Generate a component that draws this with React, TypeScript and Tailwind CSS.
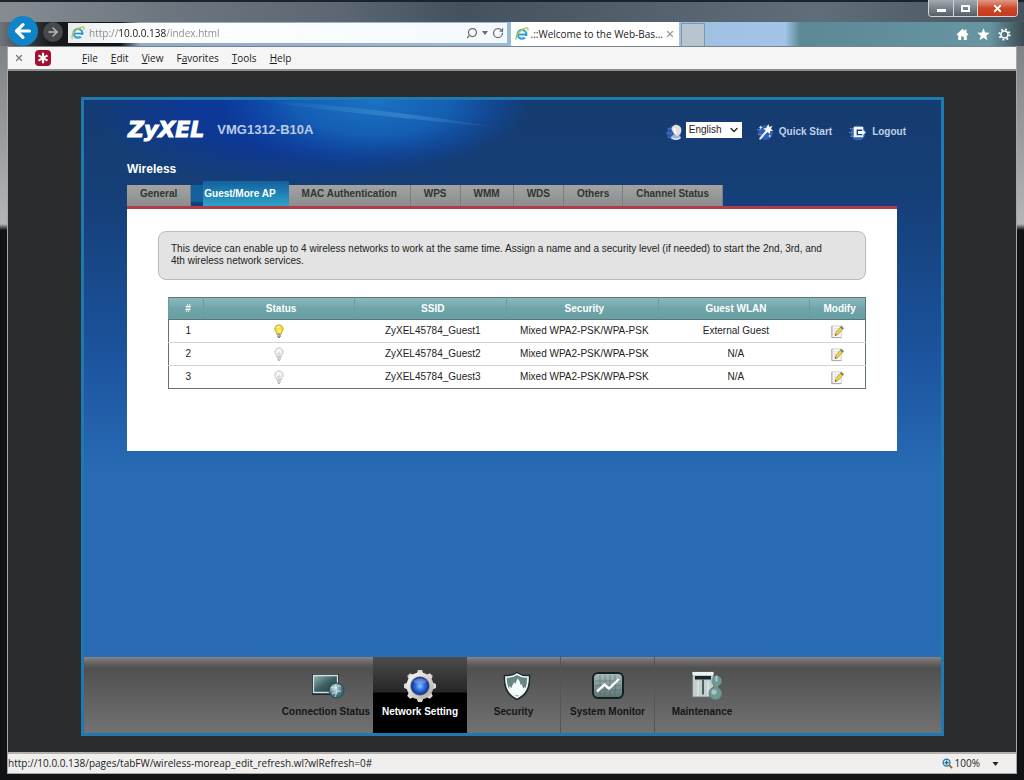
import type { ReactNode } from 'react'
import { ArrowLeft, ArrowRight, ChevronDown, RotateCw, Search, X } from 'lucide-react'

type Network = {
  id: number
  active: boolean
  ssid: string
  security: string
  guest: string
}

const networks: Network[] = [
  { id: 1, active: true, ssid: 'ZyXEL45784_Guest1', security: 'Mixed WPA2-PSK/WPA-PSK', guest: 'External Guest' },
  { id: 2, active: false, ssid: 'ZyXEL45784_Guest2', security: 'Mixed WPA2-PSK/WPA-PSK', guest: 'N/A' },
  { id: 3, active: false, ssid: 'ZyXEL45784_Guest3', security: 'Mixed WPA2-PSK/WPA-PSK', guest: 'N/A' },
]

const menus = [
  ['', 'F', 'ile'],
  ['', 'E', 'dit'],
  ['', 'V', 'iew'],
  ['F', 'a', 'vorites'],
  ['', 'T', 'ools'],
  ['', 'H', 'elp'],
]

const tabs = ['General', 'Guest/More AP', 'MAC Authentication', 'WPS', 'WMM', 'WDS', 'Others', 'Channel Status']

function IeLogo() {
  return (
    <svg viewBox="0 0 16 16" className="size-[14px] shrink-0" aria-hidden="true">
      <circle cx="8" cy="8.4" r="5" fill="#e6f5fc" stroke="#37a3dc" strokeWidth="2.6" />
      <path d="M3.5 8.6h9.4" stroke="#2b8fce" strokeWidth="1.9" />
      <path d="M10 10.2h5v2h-4z" fill="#fff" />
      <path d="M1.6 14.6C-.4 11 5.5 2.6 12 1.2c2.600-.5 3.400.8 2.500 3" fill="none" stroke="#b9c840" strokeWidth="1.5" />
    </svg>
  )
}

function Bulb({ on }: { on: boolean }) {
  return (
    <svg viewBox="0 0 12 16" className="mx-auto h-[15px] w-[12px]" role="img" aria-label={on ? 'On' : 'Off'}>
      <path
        d="M6 1a4.4 4.4 0 0 0-4.4 4.4c0 2 1.700 3 2.100 5.200h4.600c.4-2.200 2.100-3.200 2.100-5.200A4.400 4.400 0 0 0 6 1z"
        fill={on ? '#f7df3a' : '#f3f3f3'}
        stroke={on ? '#b99b1c' : '#bcbcbc'}
        strokeWidth="1"
      />
      <path d="M4.300 4.400c.4-1 1.200-1.500 2.200-1.500" stroke="#fff" strokeWidth="1.3" fill="none" />
      <path d="M5 10V6.500h2V10" stroke={on ? '#fff6b0' : '#c4c4c4'} strokeWidth=".8" fill="none" />
      <path d="M4 11.500h4M4 13h4M5 14.500h2" stroke={on ? '#75777c' : '#b5b5b5'} strokeWidth="1.1" />
    </svg>
  )
}

function EditNote() {
  return (
    <svg viewBox="0 0 16 16" className="size-[15px]" aria-hidden="true">
      <path d="M2 2h10v12.500H2z" fill="#f8f8f8" stroke="#d0d0d0" />
      <path d="M2 2v12.500h10" fill="none" stroke="#a5a5a5" />
      <path d="M4 5h6M4 7.500h4M4 10h2" stroke="#d5dade" />
      <path d="M12 2.200l2.600 2.200-6 6.800-3.200 1.300.8-3.400z" fill="#f2cf3e" stroke="#9c8830" strokeWidth=".6" />
      <path d="M12 2.200l2.600 2.200-1.200 1.400-2.600-2.200z" fill="#6c7c82" />
      <path d="M5.400 12.500l.5-1.800 1.200 1.100z" fill="#333" />
    </svg>
  )
}

function GlobeIcon() {
  return (
    <svg viewBox="0 0 20 20" className="mt-1 size-[19px]" aria-hidden="true">
      <circle cx="9.5" cy="10.5" r="7.5" fill="#2d58a8" />
      <path d="M1 10.500h6M3 6h5M3 15h6" stroke="#5c86cd" strokeWidth="1.2" strokeDasharray="1.5 1" />
      <path d="M6 15c2 3.500 9 4 11 0l-3-3H9z" fill="#9fb4d6" />
      <path d="M7 7c0-4 3-5.500 6-5s4.500 3 4.200 6.200c-.3 3-2.200 5.300-4.200 5.300-1.500 0-2.500-1-3.500-1.800z" fill="#dfe1e0" />
      <path d="M9 5c1.500 1 1 4 3 6.500" stroke="#fff" strokeWidth="1.5" fill="none" />
      <path d="M7 15.500c3 2.200 6 2.200 9 0" stroke="#e6eaf2" strokeWidth="1.5" fill="none" />
    </svg>
  )
}

function WandIcon() {
  return (
    <svg viewBox="0 0 20 20" className="size-[19px]" aria-hidden="true">
      <circle cx="10" cy="11" r="7.8" fill="#2f5db3" />
      <path d="M1 8h4M2 13h5" stroke="#6b93d8" strokeWidth="1.3" strokeDasharray="1.5 1" />
      <path d="M4.500 17.500l7.500-9" stroke="#e9effa" strokeWidth="2.2" strokeLinecap="round" />
      <path d="M13 2l.9 3.200L17.500 4l-2 3 2.500 2.300-3.300.2.200 3.500-2.500-2.500-3 1.600 1-3.200L7.500 7l3.300-.6z" fill="#fff" />
      <path d="M5 3.500l.6 1.600 1.600.5-1.600.6L5 7.800l-.6-1.600-1.600-.6 1.600-.5zM14.500 13l.5 1.200 1.200.5-1.200.5-.5 1.200-.5-1.200-1.200-.5 1.200-.5z" fill="#e3ecfb" />
    </svg>
  )
}

function ExitIcon() {
  return (
    <svg viewBox="0 0 20 20" className="size-[19px]" aria-hidden="true">
      <circle cx="9.5" cy="11.5" r="7.800" fill="#3464bb" />
      <path d="M1 7h4M0 11h4M1.500 15h4" stroke="#6d94d8" strokeWidth="1.2" strokeDasharray="1.5 1" />
      <path d="M5 5h10v11H5z" fill="#f5f8ff" />
      <path d="M8 8h6v1.500H9.500v3H14V14H8z" fill="#16407a" />
      <path d="M10.500 10h4V8.200l3.200 2.800-3.200 2.800V12h-4z" fill="#f5f8ff" />
    </svg>
  )
}

function ConnectionIcon() {
  return (
    <svg viewBox="0 0 34 26" className="ml-1 h-[26px] w-[34px]" aria-hidden="true">
      <defs>
        <linearGradient id="screen" x1="0" y1="0" x2="1" y2="1">
          <stop offset="0" stopColor="#9ab5b5" />
          <stop offset=".5" stopColor="#3c5f62" />
          <stop offset="1" stopColor="#223c40" />
        </linearGradient>
        <radialGradient id="globe" cx=".4" cy=".35">
          <stop offset="0" stopColor="#cfe4e6" />
          <stop offset="1" stopColor="#3c6e7a" />
        </radialGradient>
      </defs>
      <path d="M1 1h27v21H1z" fill="#1a2a2c" />
      <path d="M2.500 2.500h24v17h-24z" fill="url(#screen)" stroke="#d5dfdf" strokeWidth="1.3" />
      <circle cx="25.500" cy="17.500" r="7.500" fill="url(#globe)" stroke="#29464e" />
      <path d="M20 15c3-3 4 1 6-1s2-2 4 0M21 21c2-2 4 0 5-2s3 0 4-1M25 11c-1 4 2 8-1 13" stroke="#e1f1f2" strokeWidth=".8" fill="none" />
    </svg>
  )
}

function GearIcon() {
  return (
    <svg viewBox="0 0 34 34" className="size-[34px]" aria-hidden="true">
      <defs>
        <linearGradient id="gear" x1="0" y1="0" x2="1" y2="1">
          <stop offset="0" stopColor="#fff" />
          <stop offset="1" stopColor="#aaa9a3" />
        </linearGradient>
        <radialGradient id="core" cx=".5" cy=".5">
          <stop offset="0" stopColor="#8fc3ff" />
          <stop offset=".5" stopColor="#2f6fe0" />
          <stop offset="1" stopColor="#102c8c" />
        </radialGradient>
      </defs>
      <g fill="#dcdbd7">
        {[0, 45, 90, 135].map((angle) => (
          <path key={angle} d="M15 1h4l1.500 4v24L19 33h-4l-1.500-4V5z" transform={`rotate(${angle} 17 17)`} />
        ))}
      </g>
      <circle cx="17" cy="17" r="13.500" fill="url(#gear)" />
      <circle cx="17" cy="17" r="9.800" fill="#7c8085" />
      <circle cx="17" cy="17" r="9" fill="url(#core)" />
      <path d="M10 13c3-5 11-5 14 0-4 2-9 2-14 0z" fill="#fff" opacity=".25" />
    </svg>
  )
}

function ShieldIcon() {
  return (
    <svg viewBox="0 0 28 30" className="ml-[6px] h-[30px] w-[28px]" aria-hidden="true">
      <path d="M14 1.500C11 4 6 5 1.500 4.500 1 15 3 23.500 14 28.500 25 23.500 27 15 26.500 4.500 22 5 17 4 14 1.500z" fill="#5b7775" stroke="#1d2a2a" strokeWidth="1.6" />
      <path d="M14 3.200C11 5.400 7 6.200 3 6c0 9 2 16 11 20.500C23 22 25 15 25 6c-4 .2-8-.6-11-2.800z" fill="#668784" stroke="#f4f7f7" strokeWidth="1.6" />
      <path d="M14 24.500c-6-1-9-5-7.500-9.500l2 2.500c0-3 2-4 2.500-6.500l1.500 2c.5-2.500 1.500-4 2-5.500 2 2 3 4 2.800 6.500l1.700-1c-.2 2 1 2.500 1 4.500l1.800-1.500c1 4-2 8-7.800 8.500z" fill="#f7fafa" />
    </svg>
  )
}

function MonitorIcon() {
  return (
    <svg viewBox="0 0 32 27" className="h-[27px] w-[32px]" aria-hidden="true">
      <defs>
        <linearGradient id="chart" x1="0" y1="0" x2="0" y2="1">
          <stop offset="0" stopColor="#a9bdbc" />
          <stop offset="1" stopColor="#5a7271" />
        </linearGradient>
      </defs>
      <rect x="1" y="1" width="30" height="25" rx="5" fill="url(#chart)" stroke="#142021" strokeWidth="2" />
      <path d="M3 9h26M3 13.500h26M3 18h26M8 3v21M13 3v21M18 3v21M23 3v21" stroke="#4e6765" strokeWidth=".5" />
      <path d="M5 19.500l7.500-7 4.500 4 10-9.500" fill="none" stroke="#fff" strokeWidth="2.4" />
    </svg>
  )
}

function MaintenanceIcon() {
  return (
    <svg viewBox="0 0 32 30" className="ml-[10px] h-[30px] w-[32px]" aria-hidden="true">
      <path d="M1.500 1h21v25h-21z" fill="#c3cfce" stroke="#6b7a79" strokeWidth=".8" />
      <path d="M1.500 1h21v3h-21z" fill="#edf2f1" />
      <path d="M4 5h16v3.500H4z" fill="#17252a" />
      <path d="M12 8.500v15" stroke="#2e4043" strokeWidth="1.600" />
      <path d="M7 10v15M17 10v15" stroke="#e9efee" strokeWidth="1" />
      <circle cx="25.500" cy="10" r="5.200" fill="#6f9893" />
      <path d="M25.500 4.500v6" stroke="#b3cbc8" strokeWidth="2" />
      <circle cx="24.500" cy="22.500" r="6.500" fill="#6f9893" stroke="#4a706c" strokeWidth=".8" />
      <path d="M23 13h4v6h-4z" fill="#6f9893" />
      <circle cx="23" cy="21" r="2.600" fill="#a9c5c1" />
    </svg>
  )
}

const sections: { label: string; icon: ReactNode }[] = [
  { label: 'Connection Status', icon: <ConnectionIcon /> },
  { label: 'Network Setting', icon: <GearIcon /> },
  { label: 'Security', icon: <ShieldIcon /> },
  { label: 'System Monitor', icon: <MonitorIcon /> },
  { label: 'Maintenance', icon: <MaintenanceIcon /> },
]

function WindowButtons() {
  return (
    <div className="absolute top-0 right-[6px] flex h-[17px] overflow-hidden rounded-b border border-t-0 border-[#cfd4d8]">
      <button aria-label="Minimize" className="flex w-6 items-end justify-center bg-linear-to-b from-[#a3a9af] to-[#565f68] pb-1">
        <span className="h-[3px] w-[9px] bg-white" />
      </button>
      <button aria-label="Maximize" className="flex w-6 items-center justify-center border-l border-[#cfd4d8] bg-linear-to-b from-[#a3a9af] to-[#565f68]">
        <span className="h-[7px] w-[9px] border-2 border-white" />
      </button>
      <button aria-label="Close window" className="flex w-10 items-center justify-center border-l border-[#cfd4d8] bg-linear-to-b from-[#dc9a88] via-[#cf4527] to-[#c23c20] text-white">
        <X size={11} strokeWidth={4} />
      </button>
    </div>
  )
}

function TitleBar() {
  return (
    <header className="relative">
      <div className="h-[22px] border-t-2 border-[#1c232b] bg-[linear-gradient(to_right,#878c92,#6e7780_15%,#5c6773_33%,#44515e_45%,#54636f_65%,#5f6e7a_80%,#47525c)]" />
      <WindowButtons />
      <div className="flex h-6 items-end bg-[linear-gradient(to_right,#6f7479,#17191b_50px,#101214_120px,#8eaccb_140px,#a3c4e6_785px,#5d8896_800px,#6795a2_990px,#3d4b52)]">
        <button aria-label="Back" className="ml-2 flex size-[30px] shrink-0 items-center justify-center rounded-full bg-[#0f84c8] text-white">
          <ArrowLeft size={22} strokeWidth={3.5} />
        </button>
        <button aria-label="Forward" className="mb-1 ml-[5px] flex size-5 shrink-0 items-center justify-center rounded-full bg-[#46494c] text-[#b9bbbd]">
          <ArrowRight size={14} strokeWidth={2.5} />
        </button>
        <div className="mb-[3px] ml-[5px] flex h-5 min-w-0 flex-[433] items-center gap-1 bg-[linear-gradient(to_right,#e9ebed,#fff_70px,#f4f9ff)] px-[3px] text-[#6b6b6b]">
          <IeLogo />
          <input
            aria-label="Address"
            defaultValue="http://10.0.0.138/index.html"
            className="min-w-0 flex-1 bg-[linear-gradient(to_right,#888_29px,#111_29px,#111_77px,#888_77px)] bg-clip-text text-[10px] text-transparent outline-none"
          />
          <button aria-label="Search">
            <Search size={12} strokeWidth={2.5} className="-scale-x-100" />
          </button>
          <svg viewBox="0 0 6 4" className="h-1 w-[6px] fill-current" aria-hidden="true">
            <path d="M0 0h6L3 4z" />
          </svg>
          <button aria-label="Refresh">
            <RotateCw size={12} strokeWidth={2.5} />
          </button>
        </div>
        <div className="ml-1 flex h-6 min-w-0 flex-[161] items-center gap-[2px] bg-white px-1">
          <IeLogo />
          <span className="flex-1 text-[10px] whitespace-nowrap text-[#222]">.::Welcome to the Web-Bas...</span>
          <button aria-label="Close tab" className="text-[#999]">
            <X size={10} strokeWidth={3} />
          </button>
        </div>
        <button aria-label="New tab" className="ml-[2px] h-[23px] w-6 shrink-0 border border-b-0 border-[#8195a8] bg-[#b8c4d0]" />
        <div className="flex flex-[306] items-center justify-end gap-2 self-center pr-[13px] text-white">
          <button aria-label="Home">
            <svg viewBox="0 0 13 13" className="size-[13px] fill-current" aria-hidden="true">
              <path d="M6.500.8L.5 6.500l1 1 .7-.6V12h3V8.500h2.600V12h3V6.900l.7.6 1-1-2-1.900V1.500H8.800v1.500z" />
            </svg>
          </button>
          <button aria-label="Favorites">
            <svg viewBox="0 0 13 13" className="size-[13px] fill-current" aria-hidden="true">
              <path d="M6.500.3l1.700 4.300 4.500.2-3.500 2.900 1.200 4.500-3.900-2.500-3.900 2.500 1.200-4.500L.3 4.800l4.500-.2z" />
            </svg>
          </button>
          <button aria-label="Settings">
            <svg viewBox="0 0 14 14" className="size-[13px]" aria-hidden="true">
              <circle cx="7" cy="7" r="3.800" fill="none" stroke="#fff" strokeWidth="1.8" />
              <circle cx="7" cy="7" r="5.600" fill="none" stroke="#fff" strokeWidth="2" strokeDasharray="2 2.4" />
            </svg>
          </button>
        </div>
      </div>
    </header>
  )
}

function MenuBar() {
  return (
    <nav aria-label="Menu" className="flex h-[23px] items-center border-t border-[#79838d] bg-[#f5f5f5] text-[10px] text-[#1c1c1c]">
      <button aria-label="Close toolbar" className="ml-[6px] text-[#777]">
        <X size={10} strokeWidth={3} />
      </button>
      <button aria-label="Add-on" className="mr-[31px] ml-[11px] flex size-4 items-center justify-center rounded-sm bg-[#a3102f]">
        <svg viewBox="0 0 12 12" className="size-3" aria-hidden="true">
          <path d="M6 .8v10.400M1.500 3.400l9 5.200M10.500 3.400l-9 5.200" stroke="#fff" strokeWidth="2.200" />
        </svg>
      </button>
      <div className="flex gap-[13px]">
        {menus.map(([before, key, after]) => (
          <button key={before + key + after}>
            {before}
            <span className="underline">{key}</span>
            {after}
          </button>
        ))}
      </div>
    </nav>
  )
}

function PanelHeader() {
  return (
    <div className="relative flex items-center pt-[18px]">
      <span className="ml-px font-['DejaVu_Sans',sans-serif] text-[22px] leading-6 font-bold text-white italic [-webkit-text-stroke:1px_white]">
        ZyXEL
      </span>
      <span className="ml-[13px] text-[13px] font-bold text-[#bccbe6]">VMG1312-B10A</span>
      <div className="-mr-[9px] ml-auto flex items-center text-[10px] font-bold text-[#bfd0e8]">
        <GlobeIcon />
        <div className="relative ml-[2px]">
          <select aria-label="Language" className="h-4 w-14 appearance-none bg-white pl-[3px] text-[10px] leading-4 font-normal text-[#222]">
            <option>English</option>
          </select>
          <ChevronDown size={12} strokeWidth={3} className="pointer-events-none absolute top-[2px] right-[2px] text-[#333]" />
        </div>
        <a href="#quick-start" className="ml-[14px] flex items-center gap-1 pt-[3px]">
          <WandIcon />
          Quick Start
        </a>
        <a href="#logout" className="ml-[17px] flex items-center gap-1 pt-[3px]">
          <ExitIcon />
          Logout
        </a>
      </div>
    </div>
  )
}

function Tabs() {
  return (
    <div className="flex items-end border-b-[3px] border-[#b23a4b] text-[10px] font-bold">
      {tabs.map((tab) =>
        tab === 'Guest/More AP' ? (
          <div key={tab} className="flex items-end">
            <span className="mb-1 h-[17px] w-3 bg-[#15609c]" />
            <button className="h-[25px] bg-linear-to-b from-[#14619c] to-[#2fa3c9] pr-[13px] pb-px pl-px text-white">{tab}</button>
          </div>
        ) : (
          <button key={tab} className="h-[21px] border-r border-[#7c7d7e] bg-linear-to-b from-[#a3a3a3] to-[#8b8d8e] px-[13px] pb-1 text-[#333]">
            {tab}
          </button>
        ),
      )}
    </div>
  )
}

function NetworkTable() {
  return (
    <table className="w-full table-fixed border border-[#5f7377] text-center text-[10px] leading-3 text-[#222]">
      <thead>
        <tr className="h-[22px] bg-linear-to-b from-[#8bb9bd] via-[#6fa3a8] via-50% to-[#64a0a4] text-white">
          {['#', 'Status', 'SSID', 'Security', 'Guest WLAN', 'Modify'].map((title) => (
            <th key={title} className="border-b border-l border-b-[#5f7377] border-l-[#6a9ba0] pl-1 font-bold first:w-[5%] last:w-[8%]">
              {title}
            </th>
          ))}
        </tr>
      </thead>
      <tbody>
        {networks.map((net) => (
          <tr key={net.id} className="h-[23px] border-b border-[#d4d4d4] last:border-[#5f7377]">
            <td className="pl-1">{net.id}</td>
            <td>
              <Bulb on={net.active} />
            </td>
            <td className="pl-1">{net.ssid}</td>
            <td className="pl-1">{net.security}</td>
            <td className="pl-1">{net.guest}</td>
            <td>
              <button aria-label={`Modify ${net.ssid}`} className="mx-auto block">
                <EditNote />
              </button>
            </td>
          </tr>
        ))}
      </tbody>
    </table>
  )
}

function SectionNav() {
  return (
    <nav aria-label="Sections" className="flex justify-center bg-[linear-gradient(to_bottom,#858585,#6b6865_5px,#505050_11px,#727272)] pl-[3px]">
      {sections.map(({ label, icon }) => (
        <button
          key={label}
          className={
            label === 'Network Setting'
              ? 'flex h-[76px] w-[94px] flex-col items-center bg-[linear-gradient(to_bottom,#4c4c4c,#262626_35px,#000_36px)] pt-2 text-[10px] font-bold whitespace-nowrap text-white'
              : 'flex h-[76px] w-[94px] flex-col items-center border-r border-[#555] pt-2 text-[10px] font-bold whitespace-nowrap text-[#151515] first:border-0 last:border-0'
          }
        >
          <span className="flex h-[41px] items-center">{icon}</span>
          <span className="leading-3">{label}</span>
        </button>
      ))}
    </nav>
  )
}

function RouterPanel() {
  return (
    <div className="relative mt-[26px] mr-[72px] mb-4 ml-[73px] flex flex-1 flex-col border-[3px] border-[#1f7ab3] bg-[linear-gradient(to_bottom,#153c70,#153f78_100px,#1c549f_260px,#286ab4_370px,#286cb4)] font-['Liberation_Sans',Arial,sans-serif]">
      <svg viewBox="0 0 450 90" className="absolute top-0 left-0 h-[90px] w-[450px]" aria-hidden="true">
        <defs>
          <radialGradient id="deep">
            <stop offset="0" stopColor="#0b379f" />
            <stop offset=".5" stopColor="#0b379f" stopOpacity=".8" />
            <stop offset="1" stopColor="#0b379f" stopOpacity="0" />
          </radialGradient>
          <radialGradient id="glow">
            <stop offset="0" stopColor="#1b72c2" />
            <stop offset=".5" stopColor="#176bbd" stopOpacity=".75" />
            <stop offset="1" stopColor="#1258b4" stopOpacity="0" />
          </radialGradient>
          <linearGradient id="streak">
            <stop offset="0" stopColor="#59a3dc" stopOpacity="0" />
            <stop offset=".6" stopColor="#59a3dc" stopOpacity=".4" />
            <stop offset="1" stopColor="#59a3dc" stopOpacity="0" />
          </linearGradient>
        </defs>
        <ellipse cx="220" cy="8" rx="222" ry="76" fill="url(#deep)" />
        <ellipse cx="290" cy="2" rx="155" ry="66" fill="url(#glow)" />
        <path d="M170 0C250 4 330 14 420 28 340 20 250 12 170 0z" fill="url(#streak)" />
      </svg>
      <div className="flex-1 pr-11 pb-6 pl-[43px]">
        <PanelHeader />
        <h1 className="relative mt-[19px] mb-1 text-[12px] leading-4 font-bold text-white">Wireless</h1>
        <Tabs />
        <main className="bg-white px-[31px] pt-[22px] pb-[62px]">
          <p className="rounded-lg border border-[#bdbdbd] bg-[#e3e3e3] pt-[11px] pr-8 pb-3 pl-3 text-[10px] leading-3 text-[#222]">
            This device can enable up to 4 wireless networks to work at the same time. Assign a name and a security level (if needed) to start the 2nd, 3rd, and
            4th wireless network services.
          </p>
          <div className="mt-[17px] pl-[10px]">
            <NetworkTable />
          </div>
        </main>
      </div>
      <SectionNav />
    </div>
  )
}

function StatusBar() {
  return (
    <footer className="flex h-[21px] items-center justify-between border-t-2 border-[#b4b1ac] bg-[#f1efee] pr-[17px] text-[10px] text-[#222]">
      <span>http://10.0.0.138/pages/tabFW/wireless-moreap_edit_refresh.wl?wlRefresh=0#</span>
      <button className="flex items-center">
        <svg viewBox="0 0 12 12" className="mr-[2px] size-[11px]" aria-hidden="true">
          <circle cx="5" cy="5" r="3.800" fill="#bfe1ee" stroke="#2c7a9e" strokeWidth="1.4" />
          <path d="M3 5h4M5 3v4" stroke="#1f5f80" strokeWidth="1.2" />
          <path d="M8 8l3 3" stroke="#a0623a" strokeWidth="2" />
        </svg>
        100%
        <svg viewBox="0 0 6 4" className="ml-3 h-1 w-[7px]" aria-hidden="true">
          <path d="M0 0h6L3 4z" fill="#222" />
        </svg>
      </button>
    </footer>
  )
}

export default function App() {
  return (
    <div className="flex min-h-screen flex-col bg-[#16191c] font-['Open_Sans','Noto_Sans',sans-serif]">
      <TitleBar />
      <div className="flex flex-1 flex-col bg-[linear-gradient(to_bottom,#7d8286,#b3b6b8_178px,#101214_184px)] px-[7px] pb-[6px]">
        <div className="flex flex-1 flex-col border border-t-0 border-[#a5a8aa]">
          <MenuBar />
          <div className="flex flex-1 flex-col border-t-2 border-[#8f8f8f] bg-[#2b2c2d]">
            <RouterPanel />
          </div>
          <StatusBar />
        </div>
      </div>
    </div>
  )
}
